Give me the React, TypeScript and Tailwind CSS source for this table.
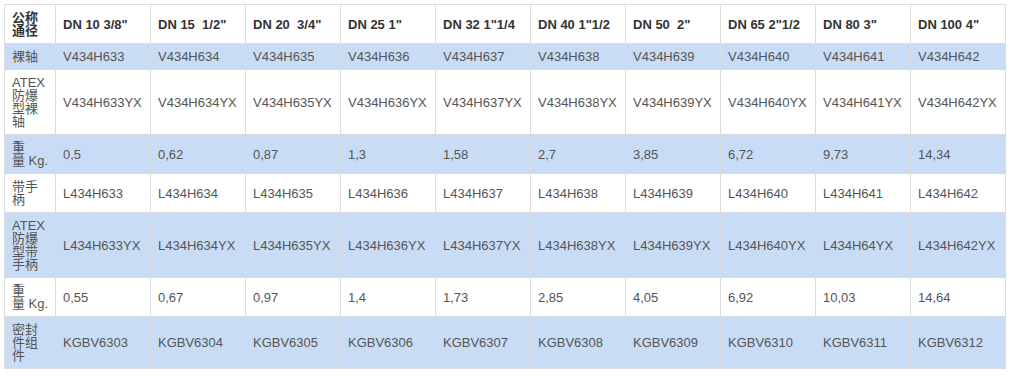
import React from 'react'

const sizes = [
  'DN 10 3/8"',
  'DN 15\u00a0 1/2"',
  'DN 20\u00a0 3/4"',
  'DN 25 1"',
  'DN 32 1"1/4',
  'DN 40 1"1/2',
  'DN 50\u00a0 2"',
  'DN 65 2"1/2',
  'DN 80 3"',
  'DN 100 4"',
]

interface Row {
  label: string[]
  values: string[]
  blue: boolean
}

// label lines are split by hand, the way the source table wraps them
const rows: Row[] = [
  {
    label: ['裸轴'],
    values: ['V434H633', 'V434H634', 'V434H635', 'V434H636', 'V434H637', 'V434H638', 'V434H639', 'V434H640', 'V434H641', 'V434H642'],
    blue: true,
  },
  {
    label: ['ATEX', '防爆', '型裸', '轴'],
    values: ['V434H633YX', 'V434H634YX', 'V434H635YX', 'V434H636YX', 'V434H637YX', 'V434H638YX', 'V434H639YX', 'V434H640YX', 'V434H641YX', 'V434H642YX'],
    blue: false,
  },
  {
    label: ['重', '量 Kg.'],
    values: ['0,5', '0,62', '0,87', '1,3', '1,58', '2,7', '3,85', '6,72', '9,73', '14,34'],
    blue: true,
  },
  {
    label: ['带手', '柄'],
    values: ['L434H633', 'L434H634', 'L434H635', 'L434H636', 'L434H637', 'L434H638', 'L434H639', 'L434H640', 'L434H641', 'L434H642'],
    blue: false,
  },
  {
    label: ['ATEX', '防爆', '型带', '手柄'],
    values: ['L434H633YX', 'L434H634YX', 'L434H635YX', 'L434H636YX', 'L434H637YX', 'L434H638YX', 'L434H639YX', 'L434H640YX', 'L434H64YX', 'L434H642YX'],
    blue: true,
  },
  {
    label: ['重', '量 Kg.'],
    values: ['0,55', '0,67', '0,97', '1,4', '1,73', '2,85', '4,05', '6,92', '10,03', '14,64'],
    blue: false,
  },
  {
    label: ['密封', '件组', '件'],
    values: ['KGBV6303', 'KGBV6304', 'KGBV6305', 'KGBV6306', 'KGBV6307', 'KGBV6308', 'KGBV6309', 'KGBV6310', 'KGBV6311', 'KGBV6312'],
    blue: true,
  },
]

export default function App() {
  return (
    <div className="bg-white w-[1015px] h-[376px] pt-[4px] pl-[4px] font-['Liberation_Sans','Noto_Sans_CJK_SC',sans-serif] text-[13px] leading-[13px]">
      <table className="table-fixed border-collapse w-[1001px]">
        <colgroup>
          <col className="w-[51px]" />
          {sizes.map((s) => (
            <col key={s} className="w-[95px]" />
          ))}
        </colgroup>
        <thead>
          <tr>
            <th className="border border-[#dddddd] pl-[7px] pr-[4px] py-[6px] text-left align-middle font-bold text-[#333333]">
              <div>公称</div>
              <div>通径</div>
            </th>
            {sizes.map((s) => (
              <th key={s} className="border border-[#dddddd] px-[7px] py-[6px] text-left align-middle font-bold text-[#333333] whitespace-nowrap">
                {s}
              </th>
            ))}
          </tr>
        </thead>
        <tbody>
          {rows.map((row, i) => (
            <tr key={i} className={row.blue ? 'bg-[#c9dcf5]' : 'bg-white'}>
              <td className="border border-[#dddddd] pl-[7px] pr-[4px] py-[6px] align-middle text-[#555555] whitespace-nowrap">
                {row.label.map((l, k) => (
                  <div key={k}>{l}</div>
                ))}
              </td>
              {row.values.map((v, j) => (
                <td key={j} className="border border-[#dddddd] px-[7px] py-[6px] align-middle text-[#555555] whitespace-nowrap">
                  {v}
                </td>
              ))}
            </tr>
          ))}
        </tbody>
      </table>
    </div>
  )
}
